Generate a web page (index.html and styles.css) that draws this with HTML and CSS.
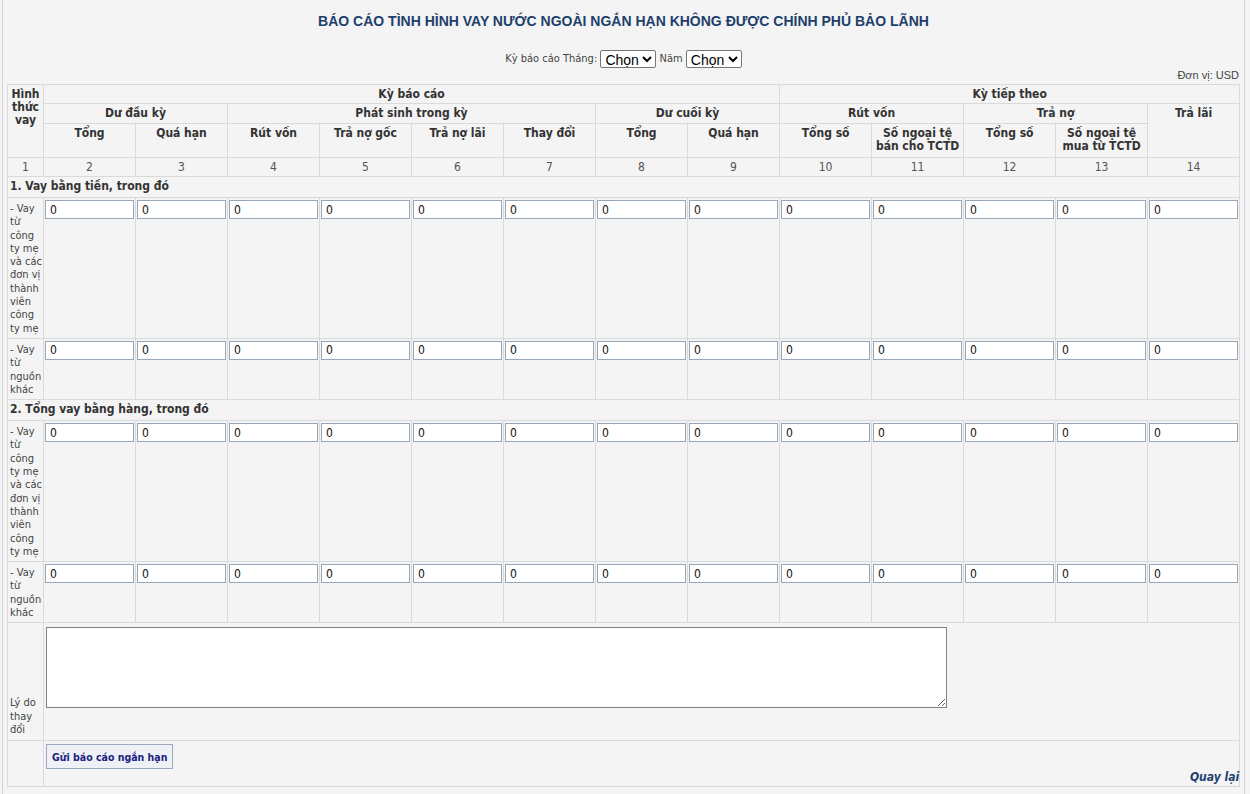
FILE: index.html
```html
<!DOCTYPE html>
<html lang="vi">

<head>
    <meta charset="UTF-8">
    <title>Báo cáo vay ngắn hạn</title>
    <link rel="stylesheet" href="styles.css">
</head>

<body>
    <div class="page">
        <h1 class="title">BÁO CÁO TÌNH HÌNH VAY NƯỚC NGOÀI NGẮN HẠN KHÔNG ĐƯỢC CHÍNH PHỦ BẢO LÃNH</h1>

        <div class="period">
            Kỳ báo cáo Tháng:
            <select><option>Chọn</option></select>
            Năm
            <select><option>Chọn</option></select>
        </div>
        <div class="unit">Đơn vị: USD</div>

        <table class="report">
            <colgroup>
                <col class="c-label">
                <col span="13" class="c-num">
            </colgroup>
            <tr class="top">
                <th rowspan="3">Hình thức vay</th>
                <th colspan="8">Kỳ báo cáo</th>
                <th colspan="5">Kỳ tiếp theo</th>
            </tr>
            <tr>
                <th colspan="2">Dư đầu kỳ</th>
                <th colspan="4">Phát sinh trong kỳ</th>
                <th colspan="2">Dư cuối kỳ</th>
                <th colspan="2">Rút vốn</th>
                <th colspan="2">Trả nợ</th>
                <th rowspan="2">Trả lãi</th>
            </tr>
            <tr class="sub">
                <th>Tổng</th>
                <th>Quá hạn</th>
                <th>Rút vốn</th>
                <th>Trả nợ gốc</th>
                <th>Trả nợ lãi</th>
                <th>Thay đổi</th>
                <th>Tổng</th>
                <th>Quá hạn</th>
                <th>Tổng số</th>
                <th>Số ngoại tệ bán cho TCTD</th>
                <th>Tổng số</th>
                <th>Số ngoại tệ mua từ TCTD</th>
            </tr>
            <tr class="nums">
                <td>1</td><td>2</td><td>3</td><td>4</td><td>5</td><td>6</td><td>7</td>
                <td>8</td><td>9</td><td>10</td><td>11</td><td>12</td><td>13</td><td>14</td>
            </tr>

            <tr class="section"><td colspan="14">1. Vay bằng tiền, trong đó</td></tr>
            <tr class="data">
                <td class="label">- Vay từ công ty mẹ và các đơn vị thành viên công ty mẹ</td>
                <td><input type="text" value="0"></td><td><input type="text" value="0"></td>
                <td><input type="text" value="0"></td><td><input type="text" value="0"></td>
                <td><input type="text" value="0"></td><td><input type="text" value="0"></td>
                <td><input type="text" value="0"></td><td><input type="text" value="0"></td>
                <td><input type="text" value="0"></td><td><input type="text" value="0"></td>
                <td><input type="text" value="0"></td><td><input type="text" value="0"></td>
                <td><input type="text" value="0"></td>
            </tr>
            <tr class="data">
                <td class="label">- Vay từ nguồn khác</td>
                <td><input type="text" value="0"></td><td><input type="text" value="0"></td>
                <td><input type="text" value="0"></td><td><input type="text" value="0"></td>
                <td><input type="text" value="0"></td><td><input type="text" value="0"></td>
                <td><input type="text" value="0"></td><td><input type="text" value="0"></td>
                <td><input type="text" value="0"></td><td><input type="text" value="0"></td>
                <td><input type="text" value="0"></td><td><input type="text" value="0"></td>
                <td><input type="text" value="0"></td>
            </tr>

            <tr class="section"><td colspan="14">2. Tổng vay bằng hàng, trong đó</td></tr>
            <tr class="data">
                <td class="label">- Vay từ công ty mẹ và các đơn vị thành viên công ty mẹ</td>
                <td><input type="text" value="0"></td><td><input type="text" value="0"></td>
                <td><input type="text" value="0"></td><td><input type="text" value="0"></td>
                <td><input type="text" value="0"></td><td><input type="text" value="0"></td>
                <td><input type="text" value="0"></td><td><input type="text" value="0"></td>
                <td><input type="text" value="0"></td><td><input type="text" value="0"></td>
                <td><input type="text" value="0"></td><td><input type="text" value="0"></td>
                <td><input type="text" value="0"></td>
            </tr>
            <tr class="data">
                <td class="label">- Vay từ nguồn khác</td>
                <td><input type="text" value="0"></td><td><input type="text" value="0"></td>
                <td><input type="text" value="0"></td><td><input type="text" value="0"></td>
                <td><input type="text" value="0"></td><td><input type="text" value="0"></td>
                <td><input type="text" value="0"></td><td><input type="text" value="0"></td>
                <td><input type="text" value="0"></td><td><input type="text" value="0"></td>
                <td><input type="text" value="0"></td><td><input type="text" value="0"></td>
                <td><input type="text" value="0"></td>
            </tr>

            <!-- ly do thay doi -->
            <tr class="reason">
                <td class="label">Lý do thay đổi</td>
                <td colspan="13"><textarea></textarea></td>
            </tr>
            <tr class="actions">
                <td></td>
                <td colspan="13">
                    <button type="button" class="btn-send">Gửi báo cáo ngắn hạn</button>
                    <div class="back"><a href="#">Quay lại</a></div>
                </td>
            </tr>
        </table>
    </div>
</body>

</html>
```

FILE: styles.css
```css
body {
    margin: 0;
    background: #f4f4f4;
    font-family: Tahoma, "DejaVu Sans Condensed", "DejaVu Sans", sans-serif;
    font-size: 11px;
    color: #333;
}
.page {
    width: 1233px;
    margin: 0 0 0 2px;
    padding: 0 4px 0 4px;
    border-left: 1px solid #d4d4d4;
    border-right: 1px solid #d4d4d4;
    min-height: 794px;
    background: #f4f4f4;
}
.title {
    margin: 0;
    padding: 13px 0 0;
    height: 27px;
    text-align: center;
    font-family: "Liberation Sans", Arial, sans-serif;
    font-size: 14px;
    font-weight: bold;
    color: #213f6b;
}
.period {
    text-align: center;
    height: 22px;
    line-height: 22px;
    padding-top: 8px;
    color: #444;
}
.period select {
    font-family: "Liberation Sans", Arial, sans-serif;
    font-size: 14px;
    height: 18px;
    padding: 0;
    border: 1px solid #767676;
    border-radius: 2px;
    background: #fff;
    color: #000;
    vertical-align: middle;
}
.unit {
    text-align: right;
    font-family: "Liberation Sans", Arial, sans-serif;
    color: #444;
    height: 14px;
    line-height: 11px;
    padding-right: 1px;
}
.report {
    border-collapse: collapse;
    table-layout: fixed;
    width: 1233px;
}
.c-label {
    width: 36px;
}
.c-num {
    width: 92px;
}
.report th,
.report td {
    border: 1px solid #dadada;
    padding: 3px 2px;
    line-height: 13px;
    vertical-align: top;
}
.report th {
    font-size: 12px;
    font-weight: bold;
    text-align: center;
    color: #333;
    padding: 3px 2px 3px;
}
.report tr.top th {
    padding-bottom: 2px;
}
.report tr.sub th {
    padding: 3px 2px 4px;
}
.report tr.nums td {
    font-size: 12px;
    text-align: center;
    color: #555;
    padding: 3px 2px 2px;
}
.report tr.section td {
    font-weight: bold;
    font-size: 12px;
    padding: 3px 2px 4px;
    color: #333;
}
.report td.label {
    padding: 4px 1px 3px 2px;
    line-height: 13.3px;
    color: #444;
    overflow-wrap: break-word;
}
.report tr.data td {
    padding: 2px 1px;
}
.report tr.data td.label {
    padding: 4px 1px 3px 2px;
}
.report input {
    width: 100%;
    box-sizing: border-box;
    height: 19px;
    margin: 0;
    padding: 0 4px;
    border: 1px solid #98a6b6;
    background: #fff;
    font-family: Tahoma, "DejaVu Sans Condensed", "DejaVu Sans", sans-serif;
    font-size: 12px;
    color: #111;
}
.report tr.reason td {
    padding: 4px 1px 4px 2px;
}
.report tr.reason td.label {
    vertical-align: bottom;
}
.report textarea {
    display: block;
    width: 901px;
    height: 81px;
    margin: 0 0 28px;
    box-sizing: border-box;
    border: 1px solid #808080;
    background: #fff;
    resize: both;
}
.report tr.actions td {
    padding: 3px 0 0 2px;
}
.btn-send {
    height: 25px;
    padding: 0 5px;
    border: 1px solid #9aa9bb;
    background: #eef1f6;
    font-family: Tahoma, "DejaVu Sans Condensed", "DejaVu Sans", sans-serif;
    font-size: 10.5px;
    font-weight: bold;
    color: #1c237f;
}
.back {
    text-align: right;
    padding: 2px 0 2px;
}
.back a {
    font-family: Tahoma, "DejaVu Sans Condensed", "DejaVu Sans", sans-serif;
    font-size: 12px;
    font-weight: bold;
    font-style: italic;
    color: #22416e;
    text-decoration: none;
}
```
